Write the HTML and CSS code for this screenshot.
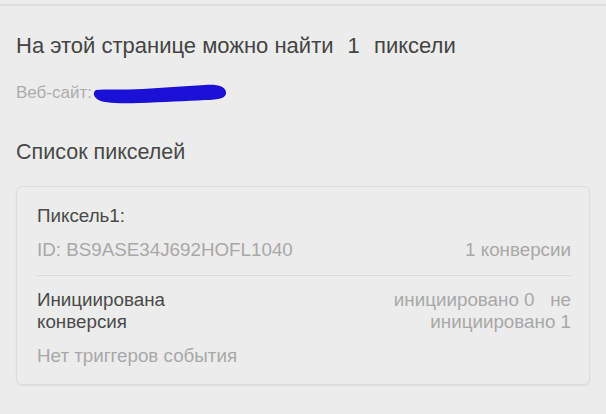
FILE: index.html
```
<!DOCTYPE html>
<html lang="ru">
<head>
<meta charset="utf-8">
<link rel="stylesheet" href="styles.css">
</head>
<body>
<div class="page">
  <div class="topline"></div>
  <h1 class="title">На этой странице можно найти <span class="num">1</span> пиксели</h1>
  <div class="site">
    <span class="site-label">Веб-сайт:</span>
    <svg class="blob" width="134" height="20" viewBox="0 0 134 20">
      <path d="M3 6 C12 5 30 6 50 5 C70 4 90 2 112 1 C124 0 132 2 133 8 C134 14 126 16 112 16 C94 17 70 18 46 19 C26 20 8 19 4 15 C0 12 0 8 3 6 Z" fill="#1a10d6"/>
    </svg>
  </div>
  <h2 class="subtitle">Список пикселей</h2>
  <div class="card">
    <div class="pixel-name">Пиксель1:</div>
    <div class="row id-row">
      <span class="muted">ID: BS9ASE34J692HOFL1040</span>
      <span class="muted">1 конверсии</span>
    </div>
    <div class="divider"></div>
    <div class="row conv-row">
      <span class="conv-label">Инициирована<br>конверсия</span>
      <span class="muted conv-val">инициировано 0 &nbsp; не<br>инициировано 1</span>
    </div>
    <div class="muted events">Нет триггеров события</div>
  </div>
</div>
</body>
</html>
```
FILE: styles.css
```
html, body {
  margin: 0;
  padding: 0;
  background: #ececec;
}
body {
  font-family: "Liberation Sans", Arial, sans-serif;
  color: #444;
}
.page {
  width: 606px;
  height: 414px;
  overflow: hidden;
}
.topline {
  height: 4px;
  border-bottom: 2px solid #dedede;
}
.title {
  margin: 26px 0 0 16px;
  font-size: 22px;
  font-weight: normal;
  color: #444;
  line-height: 28px;
}
.num {
  margin: 0 8px;
}
.site {
  margin: 22px 0 0 16px;
  display: flex;
  align-items: center;
  height: 22px;
}
.site-label {
  font-size: 17px;
  color: #adadad;
}
.blob {
  margin-left: 1px;
  margin-top: 1px;
}
.subtitle {
  margin: 35px 0 0 16px;
  font-size: 21.5px;
  font-weight: normal;
  color: #484848;
  line-height: 26px;
}
.card {
  margin: 21px 16px 0 16px;
  border: 1px solid #dcdcdc;
  border-radius: 6px;
  padding: 17px 18px 16px 20px;
  box-shadow: 0 1px 2px rgba(0,0,0,0.06);
}
.pixel-name {
  font-size: 18.8px;
  color: #4a4a4a;
  line-height: 24px;
}
.row {
  display: flex;
  justify-content: space-between;
}
.id-row {
  margin-top: 10px;
  font-size: 18.8px;
  line-height: 24px;
}
.muted {
  color: #a8a8a8;
}
.divider {
  height: 1px;
  background: #dadada;
  margin-top: 13px;
}
.conv-row {
  margin-top: 13px;
  font-size: 18.8px;
  line-height: 22px;
}
.conv-label {
  color: #4a4a4a;
}
.conv-val {
  text-align: right;
}
.events {
  margin-top: 11px;
  font-size: 18.8px;
  line-height: 24px;
}
```
